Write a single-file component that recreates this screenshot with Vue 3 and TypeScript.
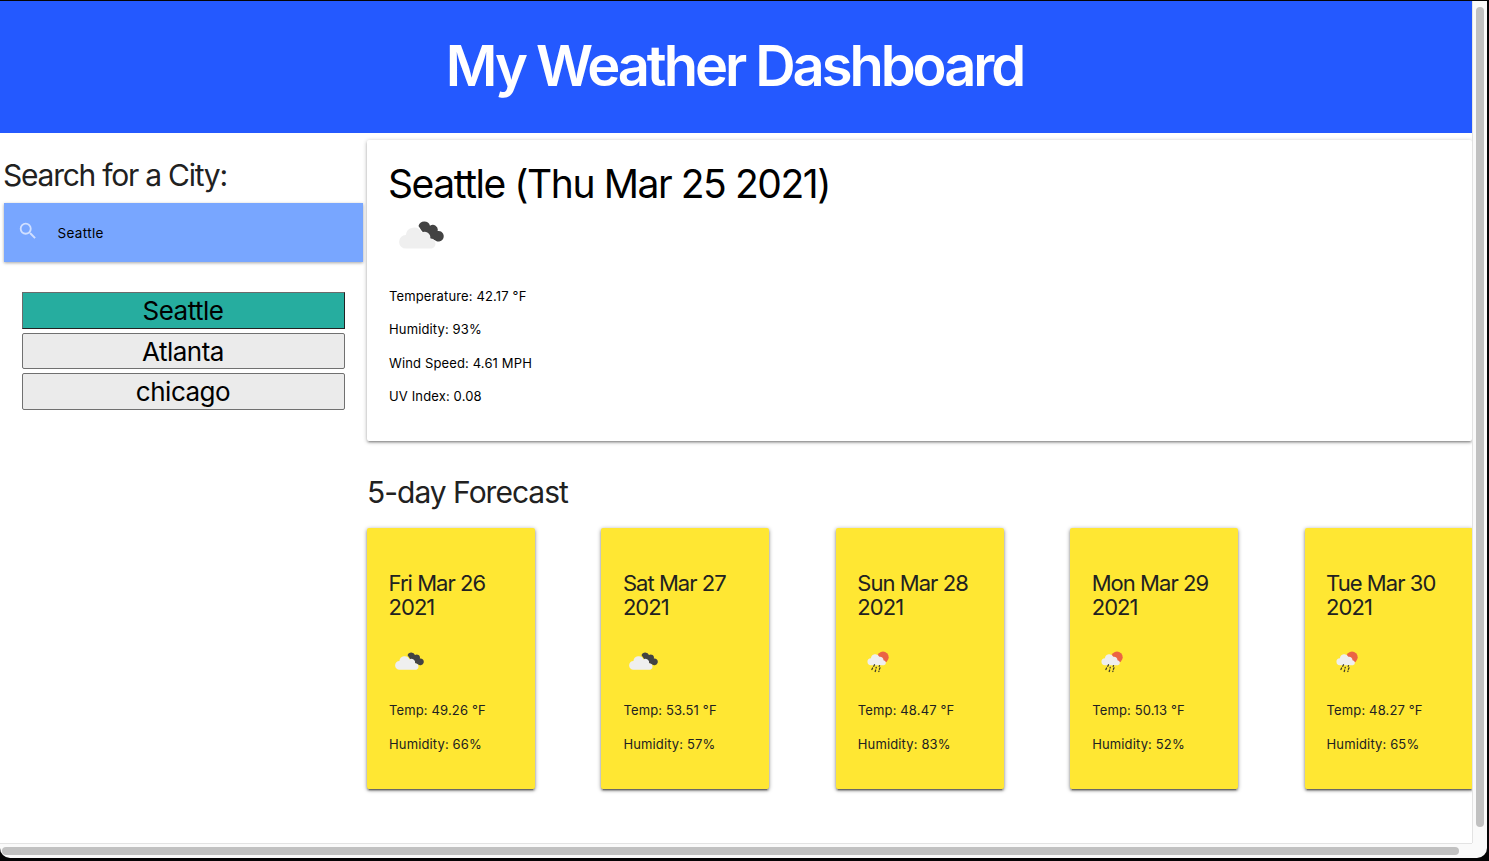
<script setup lang="ts">
interface Forecast {
  day: string
  year: string
  icon: 'clouds' | 'rain'
  temp: string
  humidity: string
}

const cities: string[] = ['Seattle', 'Atlanta', 'chicago']
const selected = 'Seattle'

const conditions: string[] = [
  'Temperature: 42.17 °F',
  'Humidity: 93%',
  'Wind Speed: 4.61 MPH',
  'UV Index: 0.08',
]

const forecast: Forecast[] = [
  { day: 'Fri Mar 26', year: '2021', icon: 'clouds', temp: '49.26', humidity: '66' },
  { day: 'Sat Mar 27', year: '2021', icon: 'clouds', temp: '53.51', humidity: '57' },
  { day: 'Sun Mar 28', year: '2021', icon: 'rain', temp: '48.47', humidity: '83' },
  { day: 'Mon Mar 29', year: '2021', icon: 'rain', temp: '50.13', humidity: '52' },
  { day: 'Tue Mar 30', year: '2021', icon: 'rain', temp: '48.27', humidity: '65' },
]

const darkCloud =
  'M19.500 5A6 6 0 0 1 31 4.800A4.900 4.900 0 0 1 38.600 10A5.300 5.300 0 1 1 36 19.300L31 17.500L25 12L23 10.300Z'
const lightCloud =
  'M7 27.600A6.800 6.800 0 0 1 6.800 14A8.300 8.300 0 0 1 22.600 11.500A5.900 5.900 0 0 1 31.300 17.500A5.200 5.200 0 0 1 33 27.600Z'
</script>

<template>
  <div class="desktop">
    <div class="window">
      <div class="viewport">
        <header class="banner"><h1>My Weather Dashboard</h1></header>
        <div class="layout">
          <aside class="sidebar">
            <h2 class="search-title">Search for a City:</h2>
            <div class="search-box">
              <svg class="search-icon" viewBox="0 0 24 24">
                <path
                  d="M15.5 14h-.79l-.28-.27A6.47 6.47 0 0 0 16 9.5 6.5 6.5 0 1 0 9.5 16c1.61 0 3.09-.59 4.23-1.57l.27.28v.79l5 4.99L20.49 19l-4.99-5zm-6 0C7.01 14 5 11.99 5 9.5S7.01 5 9.5 5 14 7.01 14 9.5 11.99 14 9.5 14z"
                />
              </svg>
              <span>Seattle</span>
            </div>
            <div class="cities">
              <button
                v-for="city in cities"
                :key="city"
                type="button"
                class="city"
                :class="{ active: city === selected }"
              >{{ city }}</button>
            </div>
          </aside>
          <main class="content">
            <section class="current">
              <h2>Seattle (Thu Mar 25 2021)</h2>
              <svg class="current-icon" viewBox="0 0 45 28">
                <path class="dark-cloud" :d="darkCloud" />
                <path class="light-cloud" :d="lightCloud" />
              </svg>
              <p v-for="line in conditions" :key="line">{{ line }}</p>
            </section>
            <h2 class="forecast-title">5-day Forecast</h2>
            <div class="forecast">
              <article v-for="item in forecast" :key="item.day" class="card">
                <h3>{{ item.day }}<br />{{ item.year }}</h3>
                <svg v-if="item.icon === 'clouds'" class="card-icon clouds" viewBox="0 0 45 28">
                  <path class="dark-cloud" :d="darkCloud" />
                  <path class="light-cloud" :d="lightCloud" />
                </svg>
                <svg v-else class="card-icon rain" viewBox="0 0 22 22">
                  <circle class="sun" cx="16" cy="6.300" r="5.700" />
                  <path
                    class="light-cloud"
                    d="M4 14.300A3.500 3.500 0 0 1 3.900 7.300A4.500 4.500 0 0 1 12.400 5.800A3.400 3.400 0 0 1 16.500 9.200A2.600 2.600 0 0 1 17 14.300Z"
                  />
                  <path
                    class="drops"
                    d="M7.500 13.800l-.7 1.500M12.500 14.700l-.3.600M5.600 17l-.7 1.500M9.300 16.300l-.3.700M13 16.800l-.6 1.500M8.700 19l-.5 1.500M12 20.100l-.2.400"
                  />
                </svg>
                <p>Temp: {{ item.temp }} °F</p>
                <p>Humidity: {{ item.humidity }}%</p>
              </article>
            </div>
          </main>
        </div>
      </div>
      <div class="track-y"><div class="thumb-y"></div></div>
      <div class="track-x"><div class="thumb-x"></div></div>
    </div>
  </div>
</template>

<style>
body {
  margin: 0;
  overflow: hidden;
}
</style>

<style scoped>
* {
  box-sizing: border-box;
}
h1,
h2,
h3,
p {
  margin: 0;
  font-weight: 400;
}
svg {
  display: block;
}
.desktop {
  width: 1489px;
  height: 861px;
  padding-top: 1px;
  background: #050405;
  color: #212121;
  font-family: Inter, 'Liberation Sans', sans-serif;
}
.window {
  display: grid;
  grid-template-columns: 1472px 15px;
  grid-template-rows: 842px 15px;
  width: 1487px;
  height: 857px;
  background: #fafafa;
  border-radius: 0 0 10px 10px;
  overflow: hidden;
}
.viewport {
  background: #fff;
  overflow: hidden;
}
.banner {
  height: 132px;
  background: #2459ff;
  color: #fff;
  text-align: center;
}
.banner h1 {
  padding-right: 3px;
  font-size: 56px;
  line-height: 131px;
  font-weight: 600;
  letter-spacing: -3.050px;
}
.layout {
  display: grid;
  grid-template-columns: 367px 1105px;
}
.sidebar {
  padding: 24px 4px 0;
}
.search-title {
  height: 46px;
  margin-left: -1px;
  font-size: 30px;
  line-height: 36px;
  letter-spacing: -1.250px;
}
.search-box {
  display: flex;
  align-items: center;
  height: 58.500px;
  padding-left: 13px;
  background: #78a6ff;
  box-shadow: 0 1px 3px rgba(0, 0, 0, 0.35);
  color: #000;
  font-size: 13.500px;
  letter-spacing: 0.350px;
}
.search-box span {
  padding-top: 2px;
}
.search-icon {
  width: 22px;
  height: 22px;
  margin: -3px 18.500px 0 0;
  fill: #d0dfff;
}
.cities {
  display: flex;
  flex-direction: column;
  gap: 4px;
  padding: 30.500px 18px 0;
}
.city {
  height: 36.500px;
  padding: 2px 1px 0 0;
  border: 1px solid #707070;
  border-radius: 2px;
  background: #ebebeb;
  color: #000;
  font-family: inherit;
  font-size: 26px;
  line-height: 32px;
  letter-spacing: -0.500px;
}
.city.active {
  border-color: #6b6b6b #222 #222 #6b6b6b;
  border-radius: 0;
  background: #26ad9f;
}
.content {
  padding-top: 7px;
}
.current {
  height: 301px;
  padding: 22px;
  border-radius: 2px;
  box-shadow: 0 2px 2px 0 rgba(0, 0, 0, 0.14), 0 3px 1px -2px rgba(0, 0, 0, 0.12),
    0 1px 4px 0 rgba(0, 0, 0, 0.3);
  color: #000;
}
.current h2 {
  margin-left: -1px;
  font-size: 39px;
  line-height: 44px;
  letter-spacing: -1.430px;
}
.current-icon {
  width: 45px;
  height: 28px;
  margin: 15px 0 31px 10px;
}
.current p,
.card p {
  font-size: 13px;
  line-height: 33.400px;
  letter-spacing: 0.140px;
}
.dark-cloud {
  fill: #434343;
}
.light-cloud {
  fill: #efefef;
}
.sun {
  fill: #eb6444;
}
.drops {
  fill: none;
  stroke: #3f3d2b;
  stroke-width: 1.300;
  stroke-linecap: round;
}
.forecast-title {
  padding: 33px 0 0;
  height: 87px;
  font-size: 30px;
  line-height: 36px;
  letter-spacing: -1px;
}
.forecast {
  display: grid;
  grid-template-columns: repeat(5, 168px);
  gap: 66.400px;
}
.card {
  height: 261px;
  padding: 43px 0 0 22px;
  border-radius: 2px;
  background: #ffe733;
  box-shadow: 0 2px 2px 0 rgba(0, 0, 0, 0.24), 0 3px 1px -2px rgba(0, 0, 0, 0.3),
    0 1px 4px 0 rgba(0, 0, 0, 0.4);
}
.card h3 {
  margin-left: -0.500px;
  font-size: 22px;
  line-height: 24px;
  letter-spacing: -0.950px;
}
.card p {
  line-height: 34px;
}
.card-icon.clouds {
  width: 29px;
  height: 18px;
  margin: 33px 0 23px 6px;
}
.card-icon.rain {
  width: 22px;
  height: 22px;
  margin: 32px 0 20px 9px;
}
.track-y {
  padding: 6px 0 0 3px;
  border-left: 1px solid #e3e3e3;
}
.thumb-y {
  width: 8px;
  height: 820px;
  border-radius: 4px;
  background: #c1c1c1;
}
.track-x {
  padding: 3px 0 0 2px;
  border-top: 1px solid #e3e3e3;
}
.thumb-x {
  width: 1457px;
  height: 8px;
  border-radius: 4px;
  background: #c1c1c1;
}
</style>
